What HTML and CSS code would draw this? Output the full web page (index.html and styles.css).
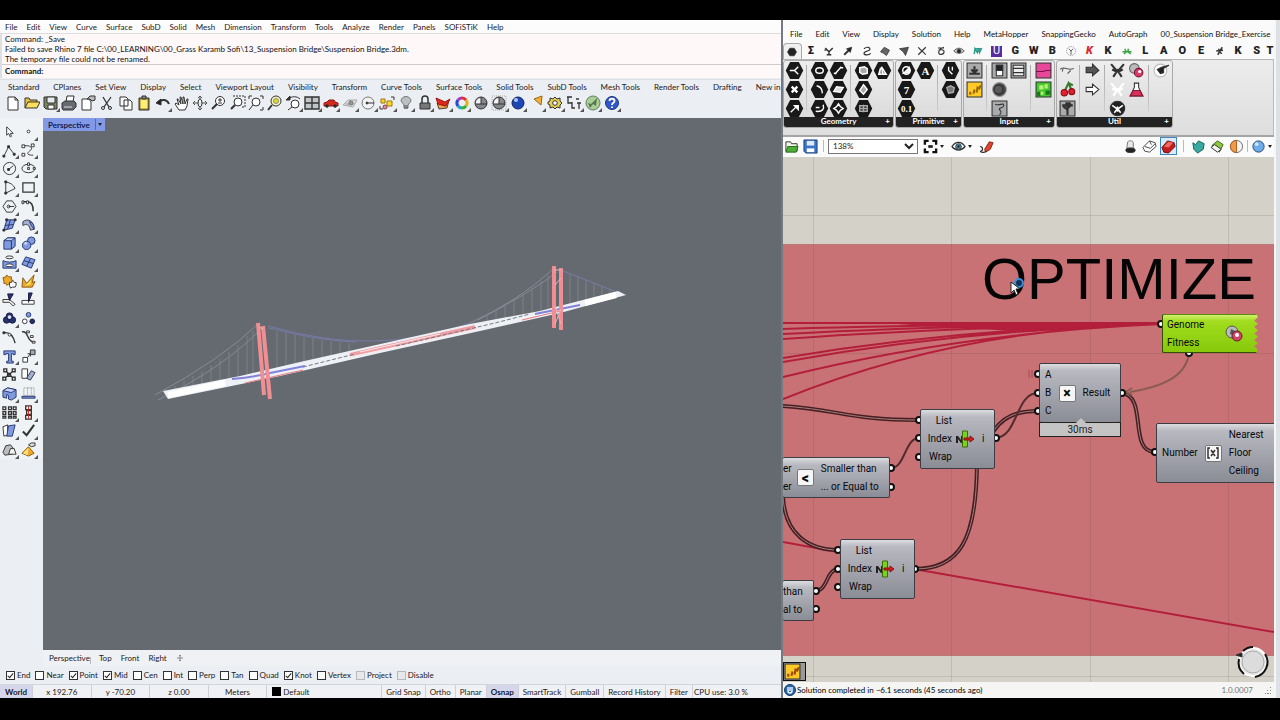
FILE: index.html
```html
<!DOCTYPE html>
<html lang="en">
<head>
<meta charset="utf-8">
<meta name="viewport" content="width=device-width, initial-scale=1">
<title>00_Suspension Bridge_Exercise</title>
<link rel="stylesheet" href="styles.css">
</head>
<body>
<div class="desktop">
<section class="rhino">
  <nav class="menu">
    <button>File</button><button>Edit</button><button>View</button><button>Curve</button><button>Surface</button><button>SubD</button><button>Solid</button><button>Mesh</button><button>Dimension</button><button>Transform</button><button>Tools</button><button>Analyze</button><button>Render</button><button>Panels</button><button>SOFiSTiK</button><button>Help</button>
  </nav>
  <div class="command">
    <div class="history">
      <p>Command: _Save</p>
      <p>Failed to save Rhino 7 file C:\00_LEARNING\00_Grass Karamb Sofi\13_Suspension Bridge\Suspension Bridge.3dm.</p>
      <p>The temporary file could not be renamed.</p>
    </div>
    <div class="prompt"><label for="cmd">Command:</label><input id="cmd" type="text"></div>
  </div>
  <div class="tabs">
    <button class="on">Standard</button><button>CPlanes</button><button>Set View</button><button>Display</button><button>Select</button><button>Viewport Layout</button><button>Visibility</button><button>Transform</button><button>Curve Tools</button><button>Surface Tools</button><button>Solid Tools</button><button>SubD Tools</button><button>Mesh Tools</button><button>Render Tools</button><button>Drafting</button><button>New in</button>
  </div>
  <div class="toolbar">
    <button aria-label="New"><svg viewBox="0 0 16 16"><path fill="#fff" d="M3 2h7l3 3v10H3zM10 2v3h3"/></svg></button>
    <button aria-label="Open"><svg viewBox="0 0 16 16"><path fill="#e8c23a" d="M1 13V3h4l1 2h7v2"/><path fill="#ffdf5c" d="M1 13l3-6h12l-3 6z"/></svg></button>
    <button class="more" aria-label="Save"><svg viewBox="0 0 16 16"><path fill="#7d8660" d="M1 2h13v12H3l-2-2z"/><path fill="#e9ecef" d="M4 2h8v6H4z"/><path fill="#fff" d="M5 10h6v4H5z"/></svg></button>
    <button aria-label="Print"><svg viewBox="0 0 16 16"><path fill="#fff" d="M5 7l1-6h7l-1 6"/><path fill="#666b70" d="M1 8l3-2h9l2 2v4l-3 3H2l-1-2z"/><path stroke="#ddd" d="M3 12h8"/></svg></button>
    <button aria-label="Properties"><svg viewBox="0 0 16 16"><path fill="#fff" d="M2 4h7l2 3v8H2z"/><path fill="#bbb" d="M7 4l3-3h5v4l-3 1-2-2z"/></svg></button>
    <button aria-label="Cut"><svg viewBox="0 0 16 16"><path stroke-width="1.3" d="M4 2l6 10M12 2L5 12"/><circle cx="4" cy="13" r="1.5"/><circle cx="11" cy="13" r="1.5"/></svg></button>
    <button aria-label="Copy"><svg viewBox="0 0 16 16"><path fill="#fff" d="M2 2h6l2 2v7H2zM6 5h6l2 2v8H6z"/></svg></button>
    <button aria-label="Paste"><svg viewBox="0 0 16 16"><path fill="#555" d="M3 3h10v12H3z"/><path fill="#ffef77" stroke="#8c7c20" d="M4 4h8v10H4z"/><path fill="#888" d="M6 1h4v3H6z"/></svg></button>
    <button class="more" aria-label="Undo"><svg viewBox="0 0 16 16"><path stroke-width="2" d="M3 7c4-3 9-3 11 2"/><path fill="#222" d="M1 8l5-4v6z"/></svg></button>
    <button aria-label="Pan"><svg viewBox="0 0 16 16"><path fill="#fff" d="M5 15l-4-6 1-1 3 2-2-6h1l3 5-1-7h1l2 7V2h1l1 7 2-5h1l-1 7-2 4z"/></svg></button>
    <button aria-label="Rotate view"><svg viewBox="0 0 16 16"><path stroke="#555" d="M8 1v14M1 8h14M6 3l2-2 2 2M6 13l2 2 2-2M3 6L1 8l2 2M13 6l2 2-2 2"/><ellipse cx="8" cy="8" rx="2" ry="4" fill="#eee"/></svg></button>
    <button aria-label="Zoom dynamic"><svg viewBox="0 0 16 16"><circle cx="9" cy="6" r="4.5" fill="#fff"/><path stroke-width="2" d="M6 9l-5 5"/><path d="M7 5h4M9 3v4M7 8h4"/></svg></button>
    <button aria-label="Zoom window"><svg viewBox="0 0 16 16"><circle cx="8" cy="7" r="4" fill="#fff"/><path stroke-width="2" d="M5 10l-4 4"/><path stroke-dasharray="2 1" d="M3 1h12v11h-4"/></svg></button>
    <button aria-label="Zoom extents"><svg viewBox="0 0 16 16"><circle cx="8" cy="7" r="4" fill="#fff"/><path d="M5 10l-4 5M1 4V1h3M12 1h3v3M15 12v3h-3"/></svg></button>
    <button aria-label="Zoom selected"><svg viewBox="0 0 16 16"><circle cx="9" cy="6" r="5" fill="#f5f5c0"/><circle cx="9" cy="6" r="2.5" fill="#dfdf22" stroke="#888"/><path stroke-width="2" d="M5 10l-4 5"/></svg></button>
    <button class="more" aria-label="Undo view change"><svg viewBox="0 0 16 16"><circle cx="9" cy="9" r="4" fill="#fff"/><path d="M6 12l-4 3M2 4c4-3 9-3 12 0"/><path fill="#333" d="M0 5l4-4v4z"/></svg></button>
    <button class="more" aria-label="Viewports"><svg viewBox="0 0 16 16"><path fill="#c2c5c8" stroke-width="1.4" d="M1 2h14v12H1zM8 2v12M1 8h14"/></svg></button>
    <button class="more" aria-label="Car"><svg viewBox="0 0 16 16"><path fill="#d6281f" stroke="#8c1712" d="M1 8l3-1 2-2h5l1 2 3 1v3H1z"/><circle cx="4" cy="11" r="1.3" fill="#222"/><circle cx="12" cy="11" r="1.3" fill="#222"/></svg></button>
    <button class="more" aria-label="Set CPlane"><svg viewBox="0 0 16 16"><path stroke="#aaa" fill="#dadde0" d="M1 10l5-5h9l-4 7zM3 9h10M8 5l-2 6"/><circle cx="9" cy="8" r="2" fill="#999" stroke="#777"/></svg></button>
    <button class="more" aria-label="Named view"><svg viewBox="0 0 16 16"><circle cx="7" cy="8" r="6" fill="#f3f3f3" stroke="#777"/><path d="M5 8h8"/><circle cx="6" cy="8" r="1" fill="#555"/></svg></button>
    <button class="more" aria-label="Select"><svg viewBox="0 0 16 16"><path fill="#ffd52e" stroke="#9a7a00" d="M2 4h4v4H2zM8 6h5v5H8z"/><path d="M12 2h3v3M1 11v3h3"/><circle cx="6" cy="12" r="2" fill="#e8a" stroke="#844"/></svg></button>
    <button class="more" aria-label="Hide"><svg viewBox="0 0 16 16"><path fill="#bdbfc2" stroke="#777" d="M6 10L3 6a5 4.500 0 1 1 10 0l-3 4v3H6z"/><path stroke="#555" d="M6 11h4M6 13h4"/></svg></button>
    <button class="more" aria-label="Lock"><svg viewBox="0 0 16 16"><path stroke-width="1.5" d="M5 8V4a3 3 0 0 1 6 0v4"/><path fill="#777" d="M3 8h10v6H3z"/></svg></button>
    <button class="more" aria-label="Layers"><svg viewBox="0 0 16 16"><path fill="#f8a23c" stroke="#444" d="M2 8l8 3 4-6-2 8-8 1z"/><path fill="#e0281c" stroke="#a01510" d="M1 3l9 4 5-3-4 7-8-2z"/></svg></button>
    <button class="more" aria-label="Color wheel"><svg viewBox="0 0 16 16" class="wheel"><path stroke="#e03030" d="M8 3a5 5 0 0 1 4 2"/><path stroke="#e8b020" d="M12 5a5 5 0 0 1 0 6"/><path stroke="#38b040" d="M12 11a5 5 0 0 1-4 2"/><path stroke="#20a8c0" d="M8 13a5 5 0 0 1-4-2"/><path stroke="#3048d0" d="M4 11a5 5 0 0 1 0-6"/><path stroke="#b030c0" d="M4 5a5 5 0 0 1 4-2"/></svg></button>
    <button aria-label="Shaded"><svg viewBox="0 0 16 16"><circle cx="8" cy="8" r="6" fill="#85878b"/><path fill="#f4f4f4" stroke="none" d="M8 3a5 5 0 0 0-5 6h5z"/><path d="M8 2v7M3 9h11"/></svg></button>
    <button class="more" aria-label="Display mode"><svg viewBox="0 0 16 16"><path stroke="#aaa" stroke-dasharray="1 1" d="M1 1h14v14H1z"/><circle cx="8" cy="8" r="6" fill="#85878b"/><path fill="#f4f4f4" stroke="none" d="M8 3a5 5 0 0 0-5 6h5z"/><path d="M8 2v7M3 9h11"/></svg></button>
    <button class="more" aria-label="Rendered"><svg viewBox="0 0 16 16"><circle cx="8" cy="8" r="6" fill="#1d47b5" stroke="#0e2458"/><circle cx="6" cy="5" r="2" fill="#a9c5ff" stroke="none"/></svg></button>
    <button class="more" aria-label="Spotlight"><svg viewBox="0 0 16 16"><path fill="#f2b23a" stroke="#96661a" d="M5 4l8-3-1 9z"/></svg></button>
    <button class="more" aria-label="Options"><svg viewBox="0 0 16 16"><path fill="#e5cf55" d="M1 7l2-1V3l3 1 2-2 2 2 3-1v3l2 2-2 2v3l-3-1-2 2-2-2-3 1v-3L1 9z"/><circle cx="8" cy="8" r="2.3" fill="#fff"/></svg></button>
    <button class="more" aria-label="Dimension"><svg viewBox="0 0 16 16"><path stroke-width="1.3" d="M1 2h5M2 2v6h4M6 7v6h3M13 8v6M11 8h4M10 4h3"/></svg></button>
    <button class="more" aria-label="Grasshopper"><svg viewBox="0 0 16 16"><circle cx="8" cy="8" r="7" fill="#a8cf98" stroke="#667a60"/><path fill="#58774c" stroke="none" d="M3 8l3 1 6-6-1 8-3-2-3 4z"/></svg></button>
    <button class="more" aria-label="Help"><svg viewBox="0 0 16 16"><circle cx="8" cy="8" r="6.5" fill="#3156c8" stroke="#1d337d"/><path stroke="#fff" stroke-width="1.8" d="M5.500 6c0-3 5-3 5 0 0 2-2.500 1.500-2.500 4M8 11.500v1.500"/></svg></button>
  </div>
  <div class="work">
    <aside class="palette">
      <button aria-label="Pointer"><svg viewBox="0 0 16 16"><path fill="#fff" d="M5 3v9l2-2 2 4 1-1-1-3h3z"/></svg></button>
      <button class="more" aria-label="Point"><svg viewBox="0 0 16 16"><circle cx="8" cy="8" r="1.500" fill="#fff"/></svg></button>
      <button class="more" aria-label="Polyline"><svg viewBox="0 0 16 16"><path d="M2 14L7 4l6 8"/><path class="k" d="M1 13h2v2H1zM6 3h2v2H6zM12 11h2v2h-2z"/></svg></button>
      <button class="more" aria-label="Curve"><svg viewBox="0 0 16 16"><path d="M3 3c8-1 9 3 8 4s-9 6 2 6"/><path class="w" d="M1 2h3v3H1zM11 1h3v3h-3zM1 11h3v3H1z"/></svg></button>
      <button class="more" aria-label="Circle"><svg viewBox="0 0 16 16"><circle cx="8" cy="8" r="6.500"/><path d="M7 9l5-4"/><path class="k" d="M6 8h2v2H6z"/></svg></button>
      <button class="more" aria-label="Ellipse"><svg viewBox="0 0 16 16"><ellipse cx="8" cy="8" rx="7" ry="4.500"/><path class="w" d="M7 2h2v3H7zM7 7h2v2H7zM13 7h2v2h-2z"/></svg></button>
      <button class="more" aria-label="Arc"><svg viewBox="0 0 16 16"><path d="M4 2v12l10-5C12 5 9 3 4 2z"/><path class="k" d="M3 1h2v2H3zM3 13h2v2H3z"/></svg></button>
      <button class="more" aria-label="Rectangle"><svg viewBox="0 0 16 16"><path stroke-width="1.300" d="M2 3h12v10H2z"/></svg></button>
      <button class="more" aria-label="Polygon"><svg viewBox="0 0 16 16"><path d="M5 2h6l4 6-4 6H5L1 8zM7 8h6"/><circle cx="7" cy="8" r="1.500"/></svg></button>
      <button class="more" aria-label="Fillet"><svg viewBox="0 0 16 16"><path stroke-width="1.600" d="M2 3h5c4 0 6 3 6 10"/><path class="w" d="M1 2h2v3H1zM6 2h2v3H6z"/></svg></button>
      <button class="more" aria-label="Surface"><svg viewBox="0 0 16 16"><path class="b" d="M5 3h9l-3 9-9 2zM3 9l9-1M9 3L6 13"/><path class="k" d="M4 2h2v2H4zM13 2h2v2h-2zM1 13h2v2H1z"/></svg></button>
      <button class="more" aria-label="Sweep"><svg viewBox="0 0 16 16"><path class="g" d="M2 5c5-4 12-1 12 8l-4 1C9 8 6 7 2 9z"/><path class="b" d="M9 5c4 1 5 4 5 8l-3-4z"/></svg></button>
      <button class="more" aria-label="Box"><svg viewBox="0 0 16 16"><path class="b" d="M2 5l4-3h8v9l-4 3H2z"/><path class="c" d="M2 5l4-3h8l-4 3z"/><path d="M10 5v9"/></svg></button>
      <button class="more" aria-label="Boolean"><svg viewBox="0 0 16 16"><circle class="b" cx="11" cy="5" r="4"/><circle class="b" cx="6" cy="10" r="4.500"/><circle fill="#c7d7ff" stroke="none" cx="5" cy="8" r="1.500"/></svg></button>
      <button class="more" aria-label="Project"><svg viewBox="0 0 16 16"><ellipse cx="8" cy="2.500" rx="4" ry="1.500"/><path class="b" d="M1 6c4 2 10 2 14 0v8H1z"/><ellipse cx="8" cy="11" rx="4" ry="1.500" fill="#fff"/></svg></button>
      <button class="more" aria-label="Mesh"><svg viewBox="0 0 16 16"><path class="b" d="M5 2l10 3-4 9L1 10zM3 6l10 3M10 4L6 12"/></svg></button>
      <button aria-label="Join"><svg viewBox="0 0 16 16"><path class="o" d="M1 4l3-1 1-2 2 2h3v3l2 1-2 2v2H7l-2 1-1-2H2V8z"/><path fill="#fff" d="M8 9h2l1-2 2 2h2v3l-1 2h-3l-2 1-1-3z"/></svg></button>
      <button aria-label="Explode"><svg viewBox="0 0 16 16"><path class="o" d="M1 14L2 4l4 6L14 1l-2 8 3-1-3 6z"/><path fill="#ffe25e" stroke="none" d="M4 13l3-3 4-4-1 5z"/></svg></button>
      <button aria-label="Trim"><svg viewBox="0 0 16 16"><path d="M1 8h7l6 5-2 2-4-4H1z"/><path class="n" d="M6 2h6L8 9z"/></svg></button>
      <button aria-label="Split"><svg viewBox="0 0 16 16"><path fill="#fff" d="M1 9h13v4H1z"/><path class="n" d="M8 1h4L8 11z"/></svg></button>
      <button class="more" aria-label="Group"><svg viewBox="0 0 16 16"><circle class="n" cx="5" cy="9.500" r="3.500"/><circle class="n" cx="11" cy="9.500" r="3.500"/><circle class="n" cx="8" cy="5.500" r="3.500"/><circle fill="#d7e0ff" stroke="none" cx="8" cy="6.500" r="2"/></svg></button>
      <button aria-label="Ungroup"><svg viewBox="0 0 16 16"><circle class="b" cx="8" cy="4" r="2.500"/><circle fill="#fff" cx="4" cy="11" r="2.500"/><circle class="n" cx="12" cy="11" r="2.500"/></svg></button>
      <button aria-label="Edit points"><svg viewBox="0 0 16 16"><path stroke-width="1.500" d="M2 3c6-1 10 3 12 11"/><path class="k" d="M1 2h2v2H1z"/><circle cx="8" cy="5" r="1.500" fill="#fff"/></svg></button>
      <button aria-label="Control points"><svg viewBox="0 0 16 16"><path stroke-width="1.500" d="M1 2c8-1 4 10 13 11"/><path class="w" d="M6 1h3v2H6zM10 6h3v2h-3zM12 12h3v2h-3z"/></svg></button>
      <button class="more" aria-label="Text"><svg viewBox="0 0 16 16"><path class="b" d="M2 2h12v4h-2V5h-2v8h2v2H5v-2h2V5H4v1H2z"/></svg></button>
      <button class="more" aria-label="Move"><svg viewBox="0 0 16 16"><path fill="#fff" d="M2 9h5v5H2z"/><path fill="#9ba8b8" d="M10 1h5v5h-5z"/><path d="M7 9l3-4M10 8V5H7"/></svg></button>
      <button aria-label="Array nodes"><svg viewBox="0 0 16 16"><path stroke-width="1.500" fill="#fff" d="M2 2h3v3H2zM11 2h3v3h-3zM6 7h3v3H6zM1 11h3v3H1zM11 11h3v3h-3zM5 5l6 6M11 5l-7 6"/></svg></button>
      <button aria-label="Rotate"><svg viewBox="0 0 16 16"><path fill="#fff" d="M1 2h6v10H1z"/><path class="g" d="M6 12L11 4l4 2-5 8z"/></svg></button>
      <button class="more" aria-label="Solid edit"><svg viewBox="0 0 16 16"><path class="b" d="M1 5l5-3 9 2v8l-5 3-3-1v-4l-2-1v4l-4-1z"/><path class="c" d="M1 5l5-3 9 2-5 3z"/></svg></button>
      <button class="more" aria-label="Ground"><svg viewBox="0 0 16 16"><path stroke="#888" stroke-dasharray="1 1" d="M3 2h11v8H3zM7 2v8M11 2v8"/><path class="b" d="M1 11h14v2H1z"/></svg></button>
      <button class="more" aria-label="Array"><svg viewBox="0 0 16 16"><path stroke-width="1.400" d="M1 2h3v3H1zM7 2h3v3H7zM12 2h3v3h-3zM1 7h3v3H1zM7 7h3v3H7zM12 7h3v3h-3zM1 12h3v2H1zM7 12h3v2H7zM12 12h3v2h-3z"/></svg></button>
      <button class="more" aria-label="Align"><svg viewBox="0 0 16 16"><path stroke-width="1.400" fill="#fff" d="M5 1h6v4H5zM6 6h5v4H6zM5 11h6v4H5z"/><path stroke="#d22" d="M8 1v14"/></svg></button>
      <button class="more" aria-label="Check"><svg viewBox="0 0 16 16"><path fill="#fff" d="M1 4l5-2v11l-4 1z"/><path class="b" d="M7 3l7-1-3 12H5z"/></svg></button>
      <button class="more" aria-label="Apply"><svg viewBox="0 0 16 16"><path stroke-width="2.200" d="M2 9l4 4 8-11"/></svg></button>
      <button class="more" aria-label="Materials"><svg viewBox="0 0 16 16"><path fill="#b9bdc0" d="M1 11l3-7 5-1 4 5-2 5-8 1z"/><path fill="#f2f2f2" d="M7 13l2-6h4l2 6z"/></svg></button>
      <button class="more" aria-label="Render"><svg viewBox="0 0 16 16"><path class="o" d="M8 5l6 7-6 3-7-3z"/><path fill="#ffe37a" stroke="none" d="M8 6l-6 6 5 2z"/><path fill="#ddd" d="M8 3l3-2h4v3l-4 1z"/></svg></button>
    </aside>
    <div class="stage">
      <div class="viewport">
        <button class="vtitle">Perspective<span class="drop"></span></button>
        <svg class="bridge" viewBox="43 118 738 532" role="img" aria-label="Suspension bridge model">
          <g class="cable">
            <path d="M155 395Q220 360 257 325M158 400Q226 366 263 327M470 323Q520 300 553 269M478 320Q530 293 557 272"/>
            <path class="dim" d="M175 386v6M184 381v7M193 376v10M202 371v14M211 365v18M220 359v22M229 352v27M238 345v32M247 336v38M253 331v42M277 331v40M286 333v36M295 335v32M304 337v28M313 338v25M322 340v21M331 341v17M340 342v14M349 343v11M487 315v10M496 310v14M505 306v16M514 300v20M523 294v24M532 288v28M541 281v32M548 276v36M570 274v35M578 277v30M586 280v25M594 283v20M602 286v16M610 289v11"/>
            <path class="blue" d="M269 328Q320 341 356 342M268 326Q330 343 372 341Q420 341 470 323M563 271L622 294"/>
          </g>
          <path fill="#edf1f5" stroke="none" d="M163 391L240 376 300 362 470 324 540 311 618 291 626 295 560 313 480 331 380 353 280 376 168 399z"/>
          <path stroke="#8182dd" stroke-width="2" d="M232 379Q255 377 270 373L305 366M535 314L580 305"/>
          <path stroke="#ef9da2" stroke-width="4" d="M350 355L390 346 475 327"/>
          <path stroke="#fbe9ec" stroke-width="1" d="M350 357L478 329M360 352L440 334"/>
          <path stroke="#e9797f" stroke-width="1" d="M245 383L303 370M522 320L560 311"/>
          <path stroke="#777883" stroke-width="1" stroke-dasharray="4 2" d="M303 367L355 354M396 346L495 323 530 314"/>
          <path stroke="#fff" stroke-width="6" d="M168 395L225 383M585 303L616 295"/>
          <g class="tower"><path d="M258 323l6 72M263 326l7 73M554 266v62M561 268v62"/></g>
          <path stroke="#f5aeb0" d="M259 327l4 2M554 270h7M555 285l6-7M555 306l6 18M555 324l6-15"/>
        </svg>
      </div>
      <div class="vtabs"><button class="on">Perspective</button><button>Top</button><button>Front</button><button>Right</button><button aria-label="Add viewport"><svg viewBox="0 0 8 8"><path stroke="#888" d="M4 1v6M1 4h6M3 2l1-1 1 1M3 6l1 1 1-1"/></svg></button></div>
    </div>
  </div>
  <div class="snaps">
    <label><input type="checkbox" checked>End</label><label><input type="checkbox">Near</label><label><input type="checkbox" checked>Point</label><label><input type="checkbox" checked>Mid</label><label><input type="checkbox">Cen</label><label><input type="checkbox">Int</label><label><input type="checkbox">Perp</label><label><input type="checkbox">Tan</label><label><input type="checkbox">Quad</label><label><input type="checkbox" checked>Knot</label><label><input type="checkbox">Vertex</label><label class="off"><input type="checkbox">Project</label><label class="off"><input type="checkbox">Disable</label>
  </div>
  <footer class="status">
    <button class="world on">World</button><span class="coord">x 192.76</span><span class="coord">y -70.20</span><span class="coord">z 0.00</span><span class="coord">Meters</span><button class="layer"><i class="swatch"></i>Default</button><button>Grid Snap</button><button>Ortho</button><button>Planar</button><button class="on">Osnap</button><button>SmartTrack</button><button>Gumball</button><button>Record History</button><button>Filter</button><span class="cpu">CPU use: 3.0 %</span>
  </footer>
</section>

<section class="gh">
  <nav class="menu">
    <button>File</button><button>Edit</button><button>View</button><button>Display</button><button>Solution</button><button>Help</button><button>MetaHopper</button><button>SnappingGecko</button><button>AutoGraph</button><span class="doc">00_Suspension Bridge_Exercise</span>
  </nav>
  <div class="cats">
    <button class="on" aria-label="Params"><svg viewBox="0 0 16 16"><path class="k" d="M5 3h6l3 5-3 5H5L2 8z"/></svg></button>
    <button>Σ</button>
    <button aria-label="Sets"><svg viewBox="0 0 16 16"><path stroke-width="2" d="M8 14V9M8 9L3 4M8 9l5-5M5 13h6M2 7l3-1"/></svg></button>
    <button aria-label="Vector"><svg viewBox="0 0 16 16"><path stroke-width="2.500" d="M3 13l7-7"/><path class="k" d="M6 5l7-2-2 7z"/></svg></button>
    <button aria-label="Curve"><svg viewBox="0 0 16 16"><path stroke-width="1.600" d="M4 5c5-4 8-1 8 1s-8 2-8 5 7 3 9 0"/></svg></button>
    <button aria-label="Surface"><svg viewBox="0 0 16 16"><path fill="#666" d="M2 9l5-6 7 4-4 7-4-3z"/></svg></button>
    <button aria-label="Mesh"><svg viewBox="0 0 16 16"><path fill="#555" d="M2 5l12-2-4 11-3-5z"/></svg></button>
    <button aria-label="Intersect"><svg viewBox="0 0 16 16"><path stroke-width="1.600" d="M3 3c3 4 6 5 10 10M13 3L3 13"/></svg></button>
    <button aria-label="Transform"><svg viewBox="0 0 16 16"><path stroke-width="1.600" d="M4 4h8M5 7c4-2 8 0 7 3s-7 4-7 0 3-6 7-7"/></svg></button>
    <button aria-label="Display"><svg viewBox="0 0 16 16"><path fill="#c7d3d6" d="M1 8c4-5 10-5 14 0-4 4-10 4-14 0z"/><circle class="k" cx="8" cy="8" r="2.500"/></svg></button>
    <button aria-label="Kangaroo"><svg viewBox="0 0 16 16"><path stroke="#2f9b8c" stroke-width="2" d="M3 12l1-7 3 5 2-6 1 6 3-6M3 5h10"/></svg></button>
    <button class="violet">U</button>
    <button>G</button><button>W</button><button>B</button>
    <button aria-label="Tree"><svg viewBox="0 0 16 16"><circle cx="8" cy="8" r="6" stroke="#888" stroke-dasharray="2 1"/><path d="M8 13V7M5 5l3 3 3-3"/></svg></button>
    <button class="red">K</button><button>K</button>
    <button aria-label="Lizard"><svg viewBox="0 0 16 16"><path stroke="#39a545" stroke-width="2" d="M2 9h12M5 5l2 4-3 3M10 5L9 9l4 3"/></svg></button>
    <button>L</button><button>A</button><button>O</button><button>E</button>
    <button aria-label="Bug"><svg viewBox="0 0 16 16"><path stroke-width="2" d="M5 13l6-10M3 8l9-1M6 5l4 7"/></svg></button>
    <button>K</button><button>S</button><button>T</button>
  </div>
  <div class="ribbon">
    <div class="panel">
      <div class="groups">
        <div class="col"><button class="hex" aria-label="Geometry"><svg viewBox="0 0 16 16"><path d="M3 8h5l4-4M8 8l4 4"/></svg></button><button class="hex" aria-label="Point"><svg viewBox="0 0 16 16"><path stroke-width="2.500" d="M5 5l6 6M11 5l-6 6"/></svg></button><button class="hex" aria-label="Vector"><svg viewBox="0 0 16 16"><path d="M4 12l6-6"/><path fill="#fff" d="M8 5h4v4z"/></svg></button></div>
        <div class="col two"><button class="hex" aria-label="Circle"><svg viewBox="0 0 16 16"><ellipse cx="8" cy="8" rx="4" ry="3"/></svg></button><button class="hex" aria-label="Line"><svg viewBox="0 0 16 16"><path d="M4 12l7-8M3 11h3M10 5h3"/></svg></button><button class="hex" aria-label="Arc"><svg viewBox="0 0 16 16"><path d="M5 4c4 1 6 4 6 8"/></svg></button><button class="hex" aria-label="Plane"><svg viewBox="0 0 16 16"><path fill="#ddd" d="M3 10l3-5 7 1-3 5z"/></svg></button><button class="hex" aria-label="Curve"><svg viewBox="0 0 16 16"><path d="M4 11c8 1 9-3 8-7M4 7h4"/></svg></button><button class="hex" aria-label="Surface"><svg viewBox="0 0 16 16"><path d="M8 3l2 3 3 2-3 2-2 3-2-3-3-2 3-2z"/></svg></button></div>
        <div class="col two"><button class="hex" aria-label="Box"><svg viewBox="0 0 16 16"><path fill="#aaa" d="M4 5l5-1 3 2v5l-5 1-3-2z"/></svg></button><button class="hex" aria-label="Mesh face"><svg viewBox="0 0 16 16"><path fill="#aaa" d="M7 4l5 8H8zM6 5l-2 7h3"/></svg></button><button class="hex" aria-label="Brep"><svg viewBox="0 0 16 16"><path fill="#aaa" d="M8 3l4 5-4 5-4-4z"/></svg></button><span></span><button class="hex" aria-label="Mesh"><svg viewBox="0 0 16 16"><path stroke="#aaa" d="M4 5h8v6H4zM8 4v8M4 8h8"/></svg></button></div>
      </div>
      <div class="name"><span>Geometry</span><b>+</b></div>
    </div>
    <div class="panel">
      <div class="groups">
        <div class="col two"><button class="hex" aria-label="Boolean"><svg viewBox="0 0 16 16"><circle cx="8" cy="8" r="4"/><path fill="#eee" d="M5 11l6-6v5z"/></svg></button><button class="hex">A</button><button class="hex">7</button><span></span><button class="hex small">0.1</button></div>
        <div class="col"><button class="hex" aria-label="Path"><svg viewBox="0 0 16 16"><path d="M6 4v4l4 4M10 4v4"/></svg></button><button class="hex" aria-label="Geometry cache"><svg viewBox="0 0 16 16"><path stroke="#aaa" fill="#777" d="M4 6l4-2 4 2-1 5-5 1z"/></svg></button></div>
      </div>
      <div class="name"><span>Primitive</span><b>+</b></div>
    </div>
    <div class="panel">
      <div class="groups">
        <div class="col"><button aria-label="Number slider"><svg viewBox="0 0 16 16"><path class="p" d="M1 1h14v14H1z"/><path stroke-width="2" d="M8 4v6M3 11h10M5 7l3 3 3-3"/></svg></button><button aria-label="Graph"><svg viewBox="0 0 16 16"><path fill="#ffc928" d="M1 1h14v14H1z"/><path stroke="#9b6b08" stroke-width="2" d="M4 13v-3M7 12l1-4M10 11l1-6M12 8l2-4"/></svg></button></div>
        <div class="col two"><button aria-label="Toggle"><svg viewBox="0 0 16 16"><path class="p" d="M1 1h14v14H1z"/><path fill="#fff" d="M5 3h6v10H5z"/><path class="k" d="M5 3h6v5H5z"/></svg></button><button aria-label="Value list"><svg viewBox="0 0 16 16"><path class="p" d="M1 1h14v14H1z"/><path fill="#eee" d="M3 3h10v3H3zM3 6h10v4H3zM3 10h10v3H3z"/></svg></button><button aria-label="Control knob"><svg viewBox="0 0 16 16"><circle cx="8" cy="8" r="6.500" fill="#444" stroke="#999"/><circle cx="7" cy="8" r="4" fill="#5a5a5a"/></svg></button><span></span><button aria-label="Digit scroller"><svg viewBox="0 0 16 16"><path class="p" d="M1 1h14v14H1z"/><path d="M4 4c4 2 8-2 8 1s-5 2-4 4 3 2 0 5"/></svg></button></div>
        <div class="col"><button aria-label="Gradient"><svg viewBox="0 0 16 16"><path fill="#e9479a" d="M1 1h14v14H1z"/><path stroke="#7d1248" d="M1 9h7l2-1h5"/></svg></button><button aria-label="Image sampler"><svg viewBox="0 0 16 16"><path fill="#44c82e" d="M1 1h14v14H1z"/><path stroke="none" fill="#b9f07a" d="M4 4h4v4H4zM9 3h3v4H9zM5 10h3v3H5z"/><path stroke="none" fill="#17781a" d="M2 10h3v4H2zM10 9h4v4h-4z"/></svg></button></div>
      </div>
      <div class="name"><span>Input</span><b>+</b></div>
    </div>
    <div class="panel">
      <div class="groups">
        <div class="col"><button aria-label="Jump"><svg viewBox="0 0 16 16"><path stroke="#555" d="M1 7c5-4 6 2 13-1M3 9l1-3M8 11l3-3"/></svg></button><button aria-label="Cherry picker"><svg viewBox="0 0 16 16"><path stroke="#357a2c" stroke-width="2" d="M5 10L9 2l3 7M9 2l4 2"/><circle cx="5" cy="11" r="3" fill="#e0202d" stroke="#8a0f18"/><circle cx="12" cy="10" r="2.800" fill="#e0202d" stroke="#8a0f18"/></svg></button><button aria-label="Param viewer"><svg viewBox="0 0 16 16"><path class="p" d="M1 1h14v14H1z"/><path stroke-width="2" d="M8 14V6M8 9L4 6M8 8l4-4M3 5h10M6 3h5"/></svg></button></div>
        <div class="col"><button aria-label="Data output"><svg viewBox="0 0 16 16"><path fill="#555" d="M2 5h6V2l6 6-6 5v-3H2z"/></svg></button><button aria-label="Data input"><svg viewBox="0 0 16 16"><path fill="#fff" d="M2 6h6V3l6 5-6 5v-3H2z"/></svg></button></div>
        <div class="col two"><button aria-label="Butterfly"><svg viewBox="0 0 16 16"><path stroke-width="2" d="M2 2l5 6h2l5-6M3 7l4 2M13 7L9 9M4 14l4-6 4 6"/></svg></button><button aria-label="Galapagos"><svg viewBox="0 0 16 16"><circle cx="6" cy="6" r="4.500" fill="#bbb" stroke="#666"/><circle cx="10" cy="10" r="4" fill="#d83a68" stroke="#7a1634"/><circle cx="11" cy="9" r="1.500" fill="#fff" stroke="none"/></svg></button><button aria-label="White butterfly"><svg viewBox="0 0 16 16"><path stroke="#fff" stroke-width="2" d="M2 2l5 6h2l5-6M3 7l4 2M13 7L9 9M4 14l4-6 4 6"/></svg></button><button aria-label="Flask"><svg viewBox="0 0 16 16"><path fill="#fff" d="M6 2h4v4l4 8H2l4-8z"/><path fill="#d6325c" stroke="#8d1735" d="M5 9h6l3 5H2z"/></svg></button><button aria-label="Black butterfly"><svg viewBox="0 0 16 16"><circle class="k" cx="8" cy="8" r="6.800"/><path stroke="#fff" stroke-width="1.500" d="M3 5l4 3h2l4-3M5 12l3-4 3 4M8 6v5"/></svg></button></div>
        <div class="col"><button aria-label="Colibri"><svg viewBox="0 0 16 16"><circle cx="7" cy="8" r="6" fill="#fff" stroke="#bbb"/><path class="k" d="M4 7l4-2 7-2-5 3v4l-3 1z"/></svg></button></div>
      </div>
      <div class="name"><span>Util</span><b>+</b></div>
    </div>
  </div>
  <div class="bar">
    <button aria-label="Open file"><svg viewBox="0 0 16 16"><path fill="#e9f6df" d="M2 13V3h5l1 2h6v8z"/><path fill="#4fae3a" stroke="#256a1a" d="M2 14l2-6h11l-2 6z"/></svg></button>
    <button aria-label="Save file"><svg viewBox="0 0 16 16"><path fill="#3a73c8" stroke="#1c407c" d="M1 1h14v14H3l-2-2z"/><path fill="#dfeaf8" stroke="none" d="M4 2h8v5H4z"/><path fill="#fff" stroke="none" d="M4 10h8v4H4z"/></svg></button>
    <span class="sep"></span>
    <select aria-label="Zoom level"><option>138%</option></select>
    <button aria-label="Zoom extents"><svg viewBox="0 0 16 16"><path stroke="#111" stroke-width="2.500" d="M2 6V2h4M10 2h4v4M14 10v4h-4M6 14H2v-4"/><path class="k" d="M6 7h4v2H6z"/></svg></button><span class="caret"></span>
    <button aria-label="Preview"><svg viewBox="0 0 16 16"><path fill="#fff" stroke-width="1.300" d="M1 8c4-6 10-6 14 0-4 5-10 5-14 0z"/><circle cx="8" cy="8" r="3" fill="#4f9cc0"/><circle class="k" cx="8" cy="8" r="1"/></svg></button><span class="caret"></span>
    <button aria-label="Sketch"><svg viewBox="0 0 16 16"><path fill="#e2452f" stroke="#7e2317" d="M6 11l5-8 4 1-3 7-5 3z"/><path stroke-width="1.300" d="M1 8c4 0 3 5 1 5s3 3 6 0"/></svg></button>
    <span class="fill"></span>
    <button aria-label="No preview"><svg viewBox="0 0 16 16"><path fill="#e8e8e8" stroke="#777" d="M5 3c2-2 6-1 6 1v6H4z"/><ellipse class="k" cx="8" cy="12" rx="5" ry="2.500"/></svg></button>
    <button aria-label="Wireframe preview"><svg viewBox="0 0 16 16"><path fill="#fff" stroke="#444" d="M1 9l7-7 6 2 1 4-7 6-5-1zM3 8l6 2 5-5M8 2l2 4"/></svg></button>
    <button class="sel" aria-label="Shaded preview"><svg viewBox="0 0 16 16"><path fill="#c41d1d" stroke="#6c0c0c" d="M1 9l6-7 7 2 1 4-7 7-5-1z"/><path fill="#ef6b62" stroke="none" d="M3 8l5-5 5 1-5 5z"/></svg></button>
    <span class="sep wide"></span>
    <button aria-label="Selected preview"><svg viewBox="0 0 16 16"><path fill="#38aaa0" stroke="#145b56" d="M2 4l3 2 3-4 6 3-1 6-6 4-4-4z"/></svg></button>
    <button aria-label="Document preview"><svg viewBox="0 0 16 16"><path fill="#8cc63b" stroke="#3c6414" d="M2 7l6-5 6 4-4 8z"/><path fill="#f1f1f1" d="M1 9l4-3 7 5-4 3z"/></svg></button>
    <button aria-label="Preview quality"><svg viewBox="0 0 16 16"><circle cx="8" cy="8" r="6.500" fill="#f3f3f3" stroke="#666"/><path fill="#f09a48" stroke="#a45d1c" d="M8 1.500a6.500 6.500 0 0 0 0 13z"/></svg></button>
    <span class="sep tight"></span>
    <button aria-label="Solver"><svg viewBox="0 0 16 16"><circle cx="8" cy="8" r="6" fill="#6eabea" stroke="#25476e"/><circle cx="6" cy="5.500" r="2" fill="#cfe6ff" stroke="none"/></svg></button><span class="caret"></span>
  </div>
  <div class="canvas">
    <div class="zone"></div>
    <svg class="wires" width="491" height="525" viewBox="783 157 491 525">
      <path class="gridline" d="M813.500 157v525M951.500 157v525M1090.500 157v525M1228.500 157v525M783 215.500h491M783 353.500h491M783 676.500h491"/>
      <g class="data"><path d="M783 323H1161M783 329Q950 324 1161 324M783 334Q950 325 1161 324M783 339Q950 327 1161 324M783 358Q960 328 1161 324M783 362Q960 330 1161 324M783 377Q960 333 1161 324M783 399Q960 328 1161 324M783 542L838 552M914 569L1274 632"/><path class="bundle" d="M880 323H1161V325Q1080 326 1030 332L980 329z"/></g>
      <g class="pipe"><path id="pipes" d="M783 406C840 410 850 420 919 420M783 495C784 535 810 550 838 550M914 569C960 569 976 540 977 465M816 591C828 590 826 570 838 569M990 438C1000 415 1020 411 1038 411M1122 393C1148 396 1128 452 1155 452"/></g>
      <use class="core" href="#pipes"/>
      <path class="single" d="M891 468C905 468 905 438 919 438M995 438C1018 438 1015 393 1038 393"/>
      <path class="link" d="M1189 354C1185 378 1160 387 1130 392"/>
      <path class="link" d="M1132 388l-6 4 6 3"/>
      <path stroke="#a5484f" d="M1029 370v8M1032 370v8"/>
      <g class="grip"><circle cx="919" cy="420" r="3"/><circle cx="919" cy="438" r="3"/><circle cx="919" cy="457" r="3"/><circle cx="996" cy="438" r="3"/><circle cx="838" cy="550" r="3"/><circle cx="838" cy="569" r="3"/><circle cx="838" cy="587" r="3"/><circle cx="915" cy="569" r="3"/><circle cx="891" cy="468" r="3"/><circle cx="891" cy="487" r="3"/><circle cx="816" cy="591" r="3"/><circle cx="816" cy="609" r="3"/><circle cx="1038" cy="374" r="3"/><circle cx="1038" cy="393" r="3"/><circle cx="1038" cy="411" r="3"/><circle cx="1122" cy="393" r="3"/><circle cx="1155" cy="452" r="3"/><circle cx="1161" cy="324" r="3"/><circle cx="1189" cy="353" r="3"/></g>
    </svg>
    <div class="scribble">OPTIMIZE</div>

    <div class="node item one"><div class="rows end"><span>List</span><span>Index</span><span>Wrap</span></div><svg viewBox="0 0 18 18"><path class="k" stroke="none" d="M0 6h2l3 4V6h2v7H5L2 9v4H0z"/><path fill="#79d21c" stroke="#3a6b0c" d="M6.500 1h5v16h-5z"/><path fill="#d02020" stroke="#8a1010" d="M8 8h6V6l4 3-4 3v-2H8z"/></svg><span class="out">i</span></div>
    <div class="node item two-b"><div class="rows end"><span>List</span><span>Index</span><span>Wrap</span></div><svg viewBox="0 0 18 18"><path class="k" stroke="none" d="M0 6h2l3 4V6h2v7H5L2 9v4H0z"/><path fill="#79d21c" stroke="#3a6b0c" d="M6.500 1h5v16h-5z"/><path fill="#d02020" stroke="#8a1010" d="M8 8h6V6l4 3-4 3v-2H8z"/></svg><span class="out">i</span></div>
    <div class="node less upper"><div class="rows"><span>er</span><span>er</span></div><b class="chip">&lt;</b><div class="rows"><span>Smaller than</span><span>... or Equal to</span></div></div>
    <div class="node less lower"><div class="rows"><span>than</span><span>al to</span></div></div>
    <div class="node mult"><div class="rows"><span>A</span><span>B</span><span>C</span></div><b class="chip">×</b><div class="rows"><span>Result</span></div></div>
    <div class="timer">30ms</div>
    <div class="node round"><div class="rows"><span>Number</span></div><b class="chip"><svg viewBox="0 0 14 14"><path stroke-width="1.500" d="M4 2H2v10h2M10 2h2v10h-2M5 4l4 6M9 4l-4 6"/></svg></b><div class="rows"><span>Nearest</span><span>Floor</span><span>Ceiling</span></div></div>
    <div class="node genome"><div class="rows"><span>Genome</span><span>Fitness</span></div><svg viewBox="0 0 18 18"><circle cx="7" cy="7" r="6" fill="#b9bbbb" stroke="#555"/><path fill="#555" stroke="none" d="M6 4l4 2-1 4-4-1z"/><circle cx="12" cy="11" r="5" fill="#d04468" stroke="#701830"/><circle cx="12" cy="10" r="2" fill="#fff" stroke="none"/></svg></div>

    <svg class="cursor" viewBox="0 0 20 20"><circle cx="10" cy="6" r="4" fill="#1a3050" stroke="#3790dc" stroke-width="2"/><path fill="#fff" stroke="#222" d="M2 5v11l3-3 2 5 2-1-2-5h4z"/></svg>
    <svg class="knob" viewBox="0 0 36 36"><circle cx="18" cy="19" r="14" fill="#e7e7e5" stroke="#fff" stroke-width="2"/><circle cx="18" cy="19" r="11" fill="#dcdcdc" stroke="#aaa"/><path stroke="#111" stroke-width="2" d="M8 8a15 15 0 0 1 10-4M30 11a15 15 0 0 1-10 23M4 16a15 15 0 0 0 5 15"/><path class="k" d="M1 12l6-2v4z"/></svg>
    <button class="widget" aria-label="Profiler"><svg viewBox="0 0 16 16"><path fill="#ffc928" d="M1 1h14v14H1z"/><path stroke="#9b4b08" stroke-width="2" d="M4 13v-3M7 12l1-4M10 11l1-6M12 8l2-4"/></svg></button>
  </div>
  <footer class="foot"><svg viewBox="0 0 12 12"><circle cx="6" cy="6" r="5.500" fill="#2467ad" stroke="#153c66"/><path stroke="#fff" stroke-width="1.300" d="M4 3v4a2 2 0 0 0 4 0V3M6 3v4"/></svg><span>Solution completed in ~6.1 seconds (45 seconds ago)</span><span class="ver">1.0.0007</span><svg class="grab" viewBox="0 0 8 8"><path stroke="#888" stroke-dasharray="1 2" d="M6.500 1v7M3.500 4v4M1 7.500h6"/></svg></footer>
</section>
<div class="edge"></div>
</div>
</body>
</html>
```
FILE: styles.css
```css
* { box-sizing: border-box; }
body { margin: 0; background: #000; font: 8px/10px Lato, "Noto Sans", sans-serif; color: #1e2022; }
button, input, select { font: inherit; color: inherit; background: none; border: 0; padding: 0; margin: 0; }
button { display: flex; align-items: center; justify-content: center; white-space: nowrap; flex: none; }
p { margin: 0; }
svg { fill: none; stroke: #333; display: block; flex: none; }
svg .k { fill: #222; }
svg .w { fill: #fff; }
svg .b { fill: #7f9ae0; stroke: #27376e; }
svg .c { fill: #c2d0fa; stroke: #27376e; }
svg .g { fill: #a3afd0; stroke: #30384e; }
svg .o { fill: #eda72c; stroke: #8a5a10; }
svg .n { fill: #28336e; stroke: #141a3e; }
svg .p { fill: #a9abad; }

.desktop { height: 100vh; padding: 20px 0 22px; display: grid; grid-template-columns: minmax(0, 781fr) minmax(0, 493fr) minmax(0, 6fr); }

/* Rhino window */
.rhino { display: flex; flex-direction: column; min-height: 0; min-width: 0; background: #ebeef2; }
.menu { display: flex; align-items: center; overflow: hidden; background: #fcfcfd; }
.rhino .menu { height: 13px; gap: 9px; padding-left: 5px; }
.command { border-top: 1px solid #ddd; border-left: 2px solid #dcdfe3; background: #fef8f8; height: 45px; padding-left: 3px; color: #111; }
.history { height: 31px; border-bottom: 1px solid #cfcbcc; margin-left: -3px; padding-left: 3px; white-space: nowrap; overflow: hidden; }
.prompt { display: flex; height: 11px; align-items: center; font-weight: 700; }
.prompt input { flex: 1; min-width: 0; height: 11px; outline: 0; }
.tabs { display: flex; height: 15px; gap: 14px; padding-left: 8px; margin-top: 1px; overflow: hidden; border-top: 1px solid #dde0e4; }
.tabs .on { box-shadow: 6px 0 0 -5px #c5c8ce; }
.toolbar { display: grid; grid-template-columns: repeat(33, minmax(0, 1fr)); width: 79.5%; padding-left: 4px; height: 18px; }
.toolbar button, .palette button { position: relative; }
.toolbar svg, .palette svg { width: 16px; height: 16px; }
.more::after { content: ""; position: absolute; right: 0; bottom: 0; border: solid transparent; border-width: 4px 0 0 4px; border-right: 0; border-bottom: 4px solid #555; border-top: 0; }
.wheel { stroke-width: 3; }
.work { display: flex; flex: 1; min-height: 0; margin-top: 6px; }
.palette { width: 43px; flex: none; padding: 4px 5px 0 0; display: grid; grid-template-columns: 1fr 1fr; grid-template-rows: repeat(18, 1fr); height: 341px; background: #f0f3f6; }
.palette svg { width: 15px; height: 15px; }
.stage { flex: 1; min-width: 0; display: flex; flex-direction: column; }
.viewport { flex: 1; min-height: 0; background: #656a71; position: relative; overflow: hidden; }
.vtitle { background: #8299e8; color: #14204e; height: 13px; padding: 0 3px 0 5px; gap: 5px; font-weight: 700; position: relative; z-index: 1; }
.drop { border-left: 1px solid #5268b0; padding-left: 2px; height: 11px; display: flex; align-items: center; }
.caret { display: flex; }
.drop::after, .caret::after { content: ""; border: 2px solid transparent; border-top: 3px solid #222; border-bottom: 0; }
.bridge { position: absolute; inset: 0; width: 100%; height: 100%; }
.cable { stroke: #9498a4; stroke-width: 1; opacity: .7; }
.cable .dim { stroke: #868b94; }
.cable .blue { stroke: #7d83bd; }
.tower { stroke: #f08f93; stroke-width: 4; }
.vtabs { display: flex; height: 16px; align-items: center; gap: 9px; padding-left: 6px; background: #eff1f4; }
.vtabs .on { box-shadow: 4px 2px 0 -3px #b9bcc4; height: 13px; }
.vtabs svg { width: 8px; height: 8px; }
.snaps { display: flex; gap: 5px; height: 18px; align-items: center; padding-left: 6px; }
.snaps label { display: flex; align-items: center; gap: 2px; }
.snaps input { appearance: none; width: 9px; height: 9px; border: 1px solid #333; background: #fff; display: grid; place-items: center; }
.snaps .off input { border-color: #b5b8bc; background: #e6e8eb; }
.snaps input:checked::after { content: ""; width: 2px; height: 5px; border: solid #222; border-width: 0 1px 1px 0; transform: rotate(40deg); }
.status { display: flex; height: 14px; border-top: 1px solid #d2d5da; background: #f0f1f4; overflow: hidden; }
.status > * { display: flex; align-items: center; justify-content: center; border-right: 1px solid #cdd0d5; padding: 0 4px; white-space: nowrap; }
.status .on { background: #d5d6ec; font-weight: 700; color: #18191f; }
.status .coord { flex: 0 0 7.5%; }
.status .world { padding: 0 5px; }
.status .layer { flex: 1; justify-content: flex-start; gap: 2px; padding-left: 5px; }
.swatch { width: 9px; height: 9px; background: #000; }
.status .cpu { border: 0; flex: 0 0 88px; justify-content: flex-start; padding-left: 1px; }

/* Grasshopper window */
.gh { display: flex; flex-direction: column; min-height: 0; min-width: 0; background: #f3f3f4; border-left: 2px solid #747a81; }
.gh .menu { height: 23px; padding: 5px 6px 0 7px; gap: 13px; color: #111; background: #fafafa; }
.doc { margin-left: auto; white-space: nowrap; }
.cats { display: grid; grid-template-columns: repeat(26, minmax(0, 1fr)) 8px; height: 16px; font-family: Roboto, sans-serif; font-weight: 900; font-size: 11px; color: #222; overflow: hidden; background: #fafafa; }
.cats svg { width: 12px; height: 12px; }
.cats .on { border: 1px solid #aaa; border-bottom: 0; border-radius: 4px 4px 0 0; background: #f1f1f1; }
.cats .violet { background: #5a2ba0; color: #fff; width: 11px; height: 11px; place-self: center; font-weight: 400; }
.cats .red { color: #dc2830; font-style: italic; }
.ribbon { display: flex; gap: 1px; height: 76px; border-top: 1px solid #b5b5b5; background: linear-gradient(#ececec, #dedede); align-items: flex-start; border-right: 1px solid #bbb; }
.panel { border: 1px solid #aaa; border-radius: 3px; background: linear-gradient(#eee, #d8d8d8); overflow: hidden; }
.groups { display: flex; height: 56px; padding: 0 1px; }
.col { display: grid; grid-template-columns: 19px; grid-auto-rows: 19px; padding-right: 6px; background: linear-gradient(#aaa, #ccc) calc(100% - 3px) 4px / 1px 46px no-repeat; }
.two { grid-template-columns: 19px 19px; }
.col:last-child { padding-right: 0; background: none; }
.col button svg { width: 17px; height: 17px; }
.col .hex { background: #181818; color: #fff; clip-path: polygon(27% 5%, 73% 5%, 96% 50%, 73% 95%, 27% 95%, 4% 50%); font: 700 11px/18px "Liberation Serif", serif; }
.col .hex svg { stroke: #fff; stroke-width: 1.5; width: 15px; height: 15px; }
.col .small { font-size: 9px; }
.name { display: flex; justify-content: center; position: relative; background: #222; color: #fff; height: 10px; line-height: 9px; font-weight: 700; }
.name b { position: absolute; right: 3px; }
.bar { display: flex; align-items: center; gap: 2px; height: 22px; border-top: 2px solid #a5a5a5; background: #fbfbfb; padding: 0 2px 2px 0; }
.bar > button { width: 17px; height: 18px; }
.bar svg { width: 15px; height: 15px; }
.bar .sel { border: 1px solid #3d86c8; background: #dcebfa; }
.bar select { width: 90px; height: 15px; border: 1px solid #777; background: #fff; padding: 0; margin-right: 2px; font-family: Lato, sans-serif; }
.sep { width: 1px; height: 12px; background: #bbb; margin: 0 2px; }
.bar .tight { margin: 0; }
.bar .wide { margin: 0 4px; }
.bar .caret { margin: 0 4px 0 -1px; }
.bar .caret:last-child { margin-right: 0; }
.fill { flex: 1; }
.canvas { flex: 1; min-height: 0; position: relative; overflow: hidden; background: #d4d2c8; }
.zone { position: absolute; left: 0; right: 0; top: 87px; height: 412px; background: #c97276; border: solid #bb7a79; border-width: 1px 0; }
.wires { position: absolute; left: 0; top: 0; overflow: visible; }
.gridline { stroke: #503c32; stroke-opacity: .14; }
.data { stroke: #b31f3a; stroke-width: 2; }
.bundle { fill: #b31f3a; stroke: none; }
.pipe { stroke: #442024; stroke-width: 4; }
.core { stroke: #b07a78; stroke-width: 1; }
.pipe path { stroke: inherit; }
.single { stroke: #542c2e; stroke-width: 2; }
.link { stroke: #8a5c50; stroke-width: 2; }
.grip { fill: #fff; stroke: #111; stroke-width: 2; }
.scribble { position: absolute; left: 199px; top: 92px; font: 58px/60px "Liberation Sans", Arial, sans-serif; color: #050505; }
.node { position: absolute; display: flex; align-items: center; border: 1px solid #3b3d42; border-radius: 2px; background: linear-gradient(#dcdde0 0, #b7b8c0 7px, #8b8d96); font: 10px/18px Roboto, sans-serif; color: #08080a; white-space: nowrap; height: 60px; padding: 0 5px; }
.rows { display: flex; flex-direction: column; }
.end { text-align: right; }
.node > svg { width: 18px; height: 18px; }
.item { width: 75px; }
.item .rows { width: 26px; }
.item svg { margin-left: 4px; }
.out { margin-left: 8px; }
.one { left: 137px; top: 252px; }
.two-b { left: 57px; top: 382px; }
.chip { width: 17px; height: 17px; margin: 0 7px; border: 1px solid #777; border-radius: 2px; background: #f6f6f6; display: grid; place-items: center; font: 900 14px/14px Roboto, sans-serif; }
.chip svg { width: 14px; height: 14px; }
.less { left: 0; height: 41px; padding: 0; border-left: 0; }
.less .chip { margin: 0 7px 0 5px; }
.less.upper { top: 300px; width: 107px; }
.less.lower { top: 423px; width: 31px; }
.mult { left: 256px; top: 206px; width: 82px; }
.timer { position: absolute; left: 256px; top: 265px; width: 82px; height: 15px; border: 1px solid #222; background: #c5c4c4; font: 10px/13px Roboto, sans-serif; text-align: center; }
.timer::before { content: ""; position: absolute; left: 36px; top: -5px; border: 5px solid transparent; border-top: 0; border-bottom-color: #c5c4c4; }
.round { left: 373px; top: 266px; width: 124px; }
.genome { left: 379px; top: 157px; width: 96px; height: 39px; justify-content: space-between; padding-right: 15px; border: 0; border-radius: 2px 0 0 2px; background: linear-gradient(#d6f47e 0, #a2dd1f 7px, #86c80a); box-shadow: inset 1px 0 #345008, inset 0 1px #5c8a10, inset 0 -1px #345008; clip-path: polygon(0 0, 98% 0, 100% 8%, 96% 17%, 100% 25%, 96% 33%, 100% 42%, 96% 50%, 100% 58%, 96% 67%, 100% 75%, 96% 83%, 100% 92%, 98% 100%, 0 100%); }
.cursor { position: absolute; left: 226px; top: 120px; width: 20px; height: 20px; }
.knob { position: absolute; right: 3px; bottom: 3px; width: 36px; height: 36px; }
.widget { position: absolute; left: 0; bottom: 1px; width: 23px; height: 19px; border: 1px solid #111; background: #999; justify-content: flex-start; }
.widget svg { width: 17px; height: 17px; }
.foot { display: flex; align-items: center; gap: 1px; height: 16px; background: #f5f5f3; padding: 0 2px 0 1px; color: #000; }
.foot > svg { width: 12px; height: 12px; }
.ver { margin-left: auto; color: #777; padding-right: 10px; }
.foot .grab { width: 8px; height: 8px; }
.edge { background: #dde0e5; border-left: 2px solid #f6f6f6; }
```
